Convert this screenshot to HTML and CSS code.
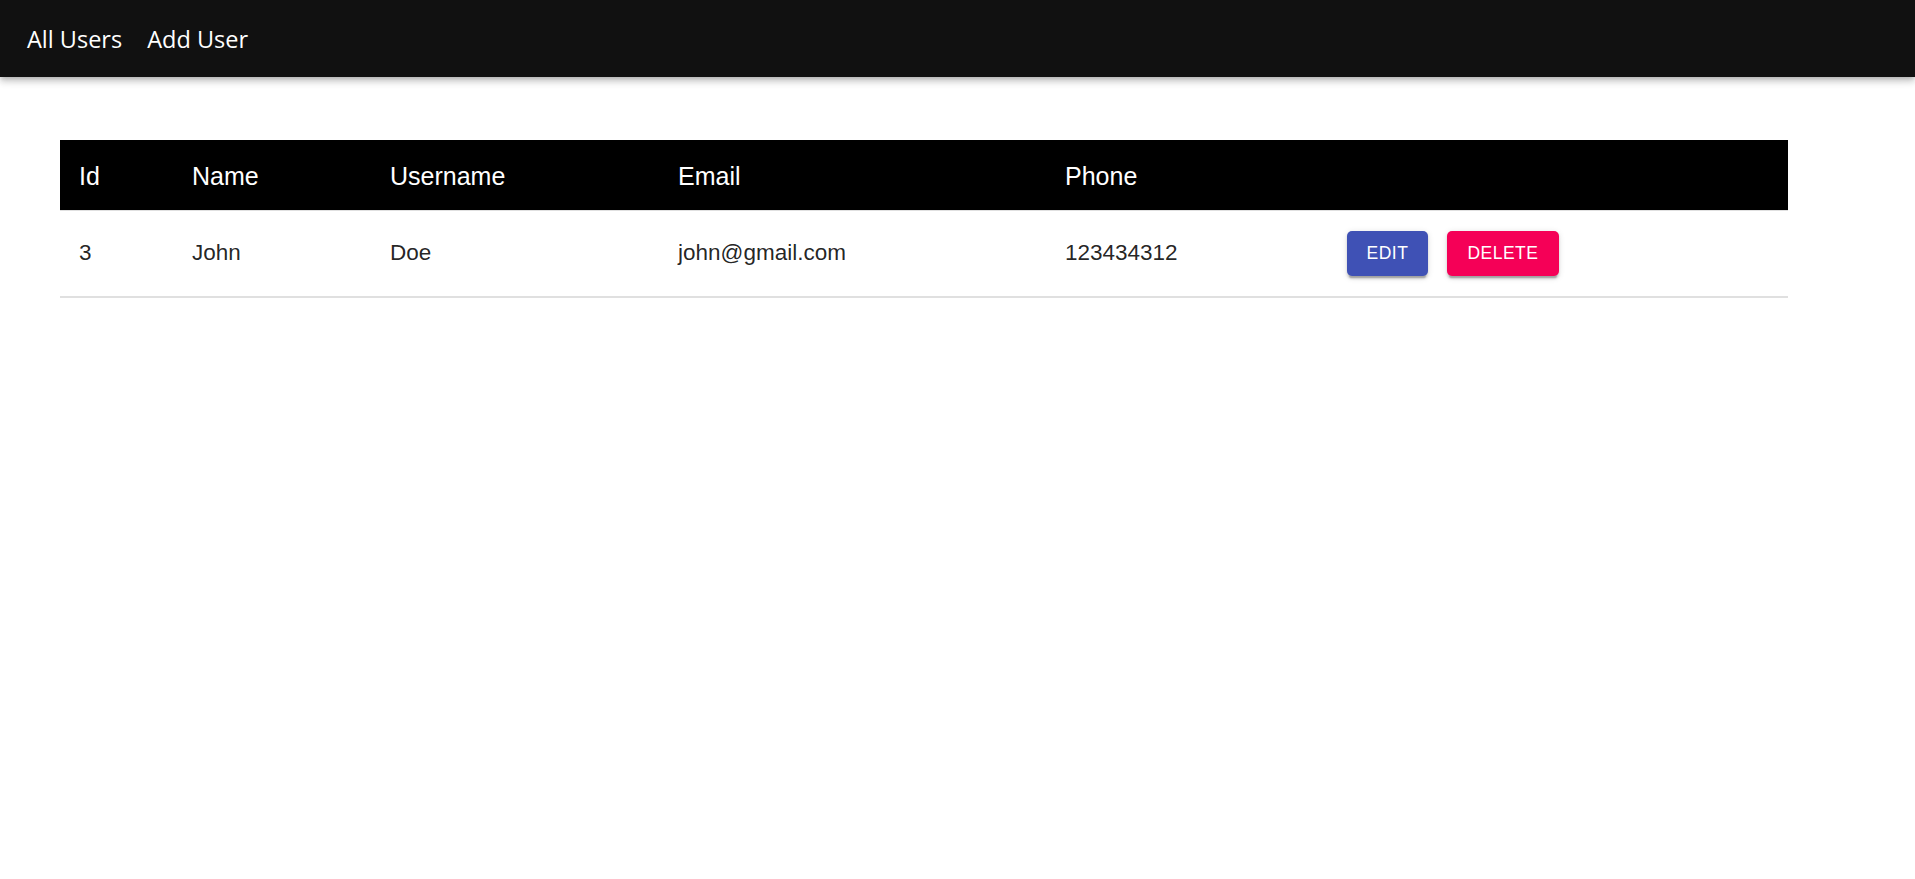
FILE: index.html
```html
<!DOCTYPE html>
<html lang="en">
<head>
<meta charset="utf-8">
<title>Users</title>
<link rel="stylesheet" href="styles.css">
</head>
<body>
<header class="appbar">
  <nav class="toolbar">
    <a class="nav-link" href="#">All Users</a>
    <a class="nav-link" href="#">Add User</a>
  </nav>
</header>
<main class="content">
  <table class="users">
    <colgroup>
      <col class="c-id"><col class="c-name"><col class="c-user"><col class="c-email"><col class="c-phone"><col class="c-actions">
    </colgroup>
    <thead>
      <tr class="head-row">
        <th>Id</th>
        <th>Name</th>
        <th>Username</th>
        <th>Email</th>
        <th>Phone</th>
        <th></th>
      </tr>
    </thead>
    <tbody>
      <tr class="body-row">
        <td>3</td>
        <td>John</td>
        <td>Doe</td>
        <td>john@gmail.com</td>
        <td>123434312</td>
        <td>
          <div class="actions">
            <button class="btn btn-edit">Edit</button>
            <button class="btn btn-delete">Delete</button>
          </div>
        </td>
      </tr>
    </tbody>
  </table>
</main>
</body>
</html>
```
FILE: styles.css
```css
html, body {
  margin: 0;
  padding: 0;
  background: #ffffff;
}

body {
  font-family: "Liberation Sans", Arial, sans-serif;
  color: rgba(0, 0, 0, 0.87);
}

.appbar {
  background: #111111;
  height: 77px;
  box-shadow: 0 2.4px 4.8px -1.2px rgba(0,0,0,0.2), 0 4.8px 6px 0 rgba(0,0,0,0.14), 0 1.2px 12px 0 rgba(0,0,0,0.12);
  position: relative;
  z-index: 1;
}

.toolbar {
  display: flex;
  align-items: center;
  height: 100%;
  padding: 0 0 0 27px;
  box-sizing: border-box;
  gap: 25px;
}

.nav-link {
  font-family: "Open Sans", "Noto Sans", sans-serif;
  font-size: 23.5px;
  color: #ffffff;
  text-decoration: none;
}

.content {
  padding: 63px 0 0 60px;
}

.users {
  width: 1728px;
  border-collapse: collapse;
  table-layout: fixed;
}

.c-id { width: 112px; }
.c-name { width: 198px; }
.c-user { width: 288px; }
.c-email { width: 387px; }
.c-phone { width: 282px; }
.c-actions { width: 461px; }

.head-row {
  background: #000000;
}

.head-row th {
  height: 70px;
  box-sizing: border-box;
  padding: 4px 20px 0 20px;
  text-align: left;
  font-weight: normal;
  font-size: 25px;
  color: #ffffff;
  border-bottom: 1px solid #e0e0e0;
}

.head-row th:first-child,
.body-row td:first-child {
  padding-left: 19px;
}

.body-row td {
  height: 87px;
  box-sizing: border-box;
  padding: 0 20px;
  font-size: 22.5px;
  color: rgba(0, 0, 0, 0.87);
  border-bottom: 2px solid #e0e0e0;
}

.actions {
  display: flex;
  gap: 19px;
  align-items: center;
}

.btn {
  display: inline-flex;
  align-items: center;
  justify-content: center;
  height: 45px;
  padding: 0 19.5px;
  border: none;
  border-radius: 5px;
  font-family: "Liberation Sans", Arial, sans-serif;
  font-size: 17.5px;
  letter-spacing: 0.5px;
  text-transform: uppercase;
  color: #ffffff;
  box-shadow: 0 3.6px 1.2px -2.4px rgba(0,0,0,0.2), 0 2.4px 2.4px 0 rgba(0,0,0,0.14), 0 1.2px 6px 0 rgba(0,0,0,0.12);
  cursor: pointer;
}

.btn-edit {
  background: #3f51b5;
}

.btn-delete {
  background: #f50057;
  padding: 0 20.5px;
}
```
